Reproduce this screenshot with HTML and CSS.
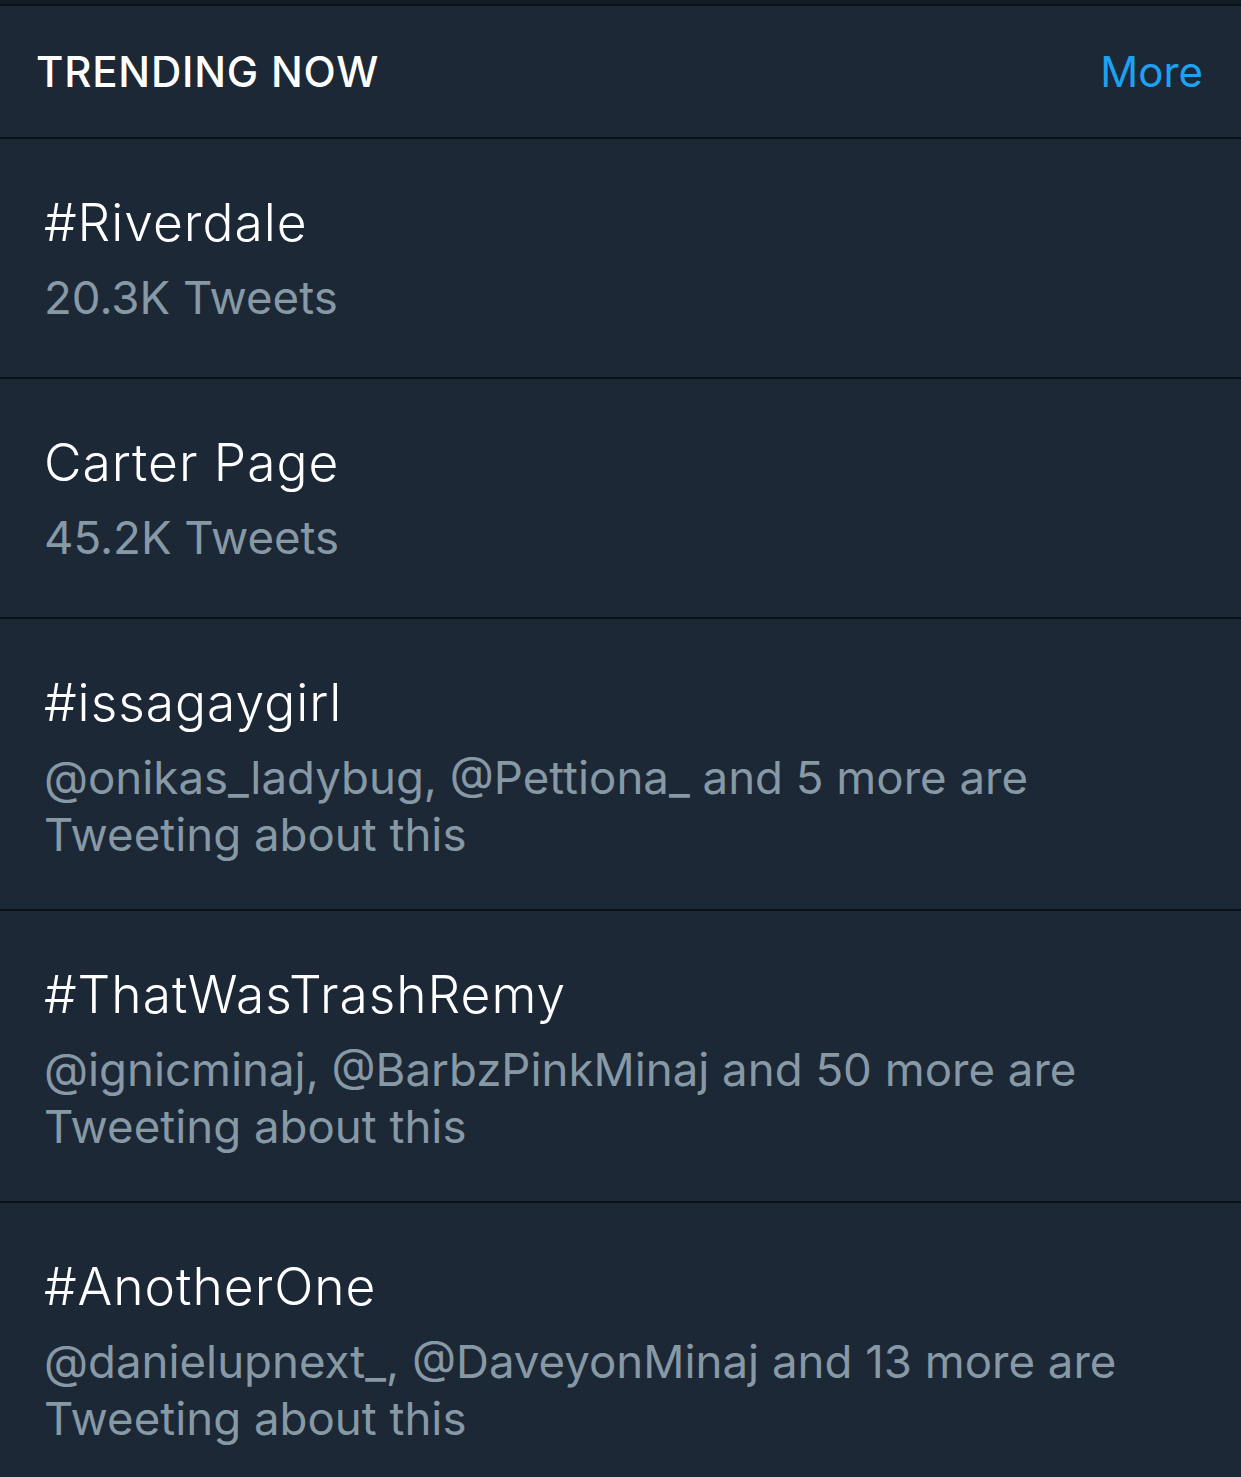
FILE: index.html
```html
<!DOCTYPE html>
<html>
<head>
<meta charset="utf-8">
<link rel="stylesheet" href="styles.css">
</head>
<body>
<div class="topstrip"></div>
<div class="panel">
  <div class="header">
    <span class="header-title">TRENDING NOW</span>
    <span class="header-more">More</span>
  </div>
  <div class="trend">
    <div class="trend-title">#Riverdale</div>
    <div class="trend-meta">20.3K Tweets</div>
  </div>
  <div class="trend">
    <div class="trend-title">Carter Page</div>
    <div class="trend-meta">45.2K Tweets</div>
  </div>
  <div class="trend multi">
    <div class="trend-title">#issagaygirl</div>
    <div class="trend-meta">@onikas_ladybug, @Pettiona_ and 5 more are<br>Tweeting about this</div>
  </div>
  <div class="trend multi">
    <div class="trend-title">#ThatWasTrashRemy</div>
    <div class="trend-meta">@ignicminaj, @BarbzPinkMinaj and 50 more are<br>Tweeting about this</div>
  </div>
  <div class="trend multi">
    <div class="trend-title">#AnotherOne</div>
    <div class="trend-meta">@danielupnext_, @DaveyonMinaj and 13 more are<br>Tweeting about this</div>
  </div>
</div>
</body>
</html>
```

FILE: styles.css
```css
html, body {
  margin: 0;
  padding: 0;
  background: #1c2836;
}
body {
  font-family: Inter, "Noto Sans", sans-serif;
  width: 1241px;
  height: 1477px;
  overflow: hidden;
}
.topstrip {
  height: 4px;
  background: #141c25;
  border-bottom: 2px solid #0b1118;
}
.panel {
  background: #1c2836;
}
.header {
  height: 131px;
  display: flex;
  align-items: center;
  justify-content: space-between;
  padding: 0 38px 0 36px;
  border-bottom: 2px solid #0b1118;
}
.header-title {
  color: #ffffff;
  font-size: 42px;
  font-weight: 500;
  letter-spacing: 0.8px;
}
.header-more {
  color: #1da1f2;
  font-size: 42px;
  font-weight: 400;
}
.trend {
  padding: 53px 44px 51px 44px;
  border-bottom: 2px solid #0b1118;
}
.trend.multi {
  padding-bottom: 46px;
}
.trend-title {
  color: #ffffff;
  font-size: 51.5px;
  font-weight: 300;
  letter-spacing: 1px;
  line-height: 60px;
  margin-bottom: 17px;
}
.trend-meta {
  color: #8899a6;
  font-size: 45.6px;
  line-height: 57px;
}
```
